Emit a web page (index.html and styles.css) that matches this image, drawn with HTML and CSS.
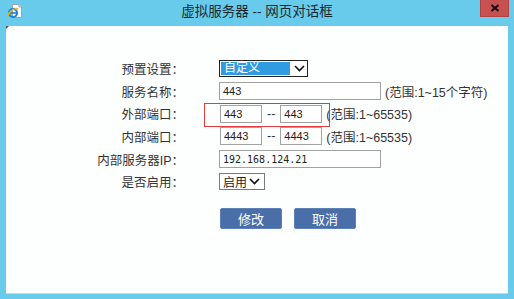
FILE: index.html
```html
<!DOCTYPE html>
<html lang="zh-CN">
<head>
    <meta charset="UTF-8">
    <title>虚拟服务器 -- 网页对话框</title>
    <link rel="stylesheet" href="styles.css">
</head>
<body>
    <div class="window">
        <div class="titlebar">
            <span class="app-icon">
                <svg width="17" height="16" viewBox="0 0 17 16">
                    <path d="M6.5 1.5 H13 L15.5 4 V14.5 H6.5 Z" fill="#fff" stroke="#9aa4ad" stroke-width="1"/>
                    <path d="M13 1.5 V4 H15.5" fill="#e8edf1" stroke="#9aa4ad" stroke-width="1"/>
                    <circle cx="7" cy="10" r="4" fill="none" stroke="#1a7fd6" stroke-width="2"/>
                    <path d="M3.6 10 H10.6" stroke="#1a7fd6" stroke-width="1.6"/>
                    <path d="M1.5 13.5 C3 8 8 5 12 6" fill="none" stroke="#f0b400" stroke-width="1.4"/>
                </svg>
            </span>
            <span class="title">虚拟服务器 -- 网页对话框</span>
            <span class="close">
                <svg width="10" height="8" viewBox="0 0 10 8">
                    <path d="M1.5 1 L8.5 7 M8.5 1 L1.5 7" stroke="#111" stroke-width="2"/>
                </svg>
            </span>
        </div>

        <div class="content">
            <div class="form">
                <label>预置设置：</label>
                <div class="field">
                    <div class="select preset">
                        <span class="select-text">自定义</span>
                        <svg class="chevron" width="11" height="7" viewBox="0 0 11 7">
                            <polyline points="1,1 5.5,5.5 10,1" fill="none" stroke="#111" stroke-width="1.6"/>
                        </svg>
                    </div>
                </div>

                <label>服务名称：</label>
                <div class="field">
                    <input type="text" class="long" value="443">
                    <span class="hint">(范围:1~15个字符)</span>
                </div>

                <label>外部端口：</label>
                <div class="field">
                    <input type="text" class="short" value="443">
                    <span class="dash">--</span>
                    <input type="text" class="short" value="443">
                    <span class="hint">(范围:1~65535)</span>
                    <span class="marker"></span>
                </div>

                <label>内部端口：</label>
                <div class="field">
                    <input type="text" class="short" value="4443">
                    <span class="dash">--</span>
                    <input type="text" class="short" value="4443">
                    <span class="hint">(范围:1~65535)</span>
                </div>

                <label>内部服务器IP：</label>
                <div class="field">
                    <input type="text" class="long mono" value="192.168.124.21">
                </div>

                <label>是否启用：</label>
                <div class="field">
                    <div class="select enable">
                        <span class="select-text">启用</span>
                        <svg class="chevron" width="11" height="7" viewBox="0 0 11 7">
                            <polyline points="1,1 5.5,5.5 10,1" fill="none" stroke="#111" stroke-width="1.6"/>
                        </svg>
                    </div>
                </div>
            </div>

            <div class="actions">
                <button>修改</button>
                <button>取消</button>
            </div>
        </div>
    </div>
</body>
</html>
```

FILE: styles.css
```css
body {
    margin: 0;
    padding: 0;
    font-family: "Liberation Sans", "Noto Sans CJK SC", sans-serif;
    background-color: #68cbeb;
}

.window {
    width: 514px;
    height: 299px;
    display: flex;
    flex-direction: column;
    background-color: #68cbeb;
}

.titlebar {
    height: 26px;
    display: grid;
    grid-template-columns: 1fr auto 1fr;
}

.app-icon {
    justify-self: start;
    margin: 3px 0 0 6px;
    height: 16px;
}

.title {
    font-size: 13.5px;
    color: #1b2830;
    line-height: 26px;
    margin-top: -1px;
}

.close {
    justify-self: end;
    width: 29px;
    height: 17px;
    margin-right: 5px;
    background-color: #c75050;
    box-sizing: border-box;
    border: 1px solid #b04444;
    border-top: none;
    display: flex;
    justify-content: center;
    align-items: center;
}

.content {
    position: relative;
    height: 268px;
    margin: 0 6px;
    background-color: #fdfefe;
    border-bottom: 1px solid #c9d6de;
    box-sizing: border-box;
    padding-top: 31px;
}

.content::before {
    content: "";
    position: absolute;
    left: 0;
    top: 0;
    border-top: 3px solid #555;
    border-right: 3px solid transparent;
}

.form {
    display: grid;
    grid-template-columns: 178px 1fr;
    grid-auto-rows: 22.7px;
    column-gap: 35px;
}

.form label {
    text-align: right;
    font-size: 12.5px;
    color: #333;
    align-self: center;
}

.field {
    position: relative;
    display: flex;
    align-items: center;
}

.field input {
    height: 18px;
    box-sizing: border-box;
    border: 1px solid #a2a2a2;
    padding: 0 3px;
    margin: 0;
    font-family: "Liberation Sans", sans-serif;
    font-size: 11px;
    color: #222;
    background-color: #fff;
    outline: none;
}

.field input.long {
    width: 162px;
}

.field input.short {
    width: 42px;
    margin-left: 1px;
}

.field input.mono {
    font-family: "DejaVu Sans Mono", monospace;
    font-size: 10px;
}

.dash {
    font-size: 12.5px;
    color: #333;
    margin: 0 4px 0 5px;
}

.hint {
    font-size: 12.5px;
    color: #333;
    margin-left: 4px;
}

.marker {
    position: absolute;
    left: -15px;
    top: 1px;
    width: 126px;
    height: 24px;
    box-sizing: border-box;
    border: 1px solid #e53a3a;
}

.select {
    display: flex;
    align-items: center;
    justify-content: space-between;
    height: 17px;
    box-sizing: border-box;
    background-color: #fff;
    font-size: 12px;
}

.select.preset {
    width: 89px;
    border: 1px solid #222;
    padding: 1px 2px 1px 1px;
}

.select.preset .select-text {
    flex: 1;
    height: 13px;
    line-height: 13px;
    background-color: #2f9be0;
    color: #fff;
    padding-left: 3px;
    margin-right: 4px;
}

.select.enable {
    width: 46px;
    border: 1px solid #7a7a7a;
    padding: 0 4px 0 3px;
    color: #222;
}

.chevron {
    flex-shrink: 0;
}

.actions {
    display: flex;
    gap: 12px;
    padding-left: 214px;
    margin-top: 15px;
}

.actions button {
    width: 62px;
    height: 21px;
    padding: 0;
    background-color: #4a6ea8;
    border: 1px solid #5d80b6;
    border-radius: 2px;
    color: #fff;
    font-family: "Noto Sans CJK SC", sans-serif;
    font-size: 13px;
    cursor: pointer;
}
```
